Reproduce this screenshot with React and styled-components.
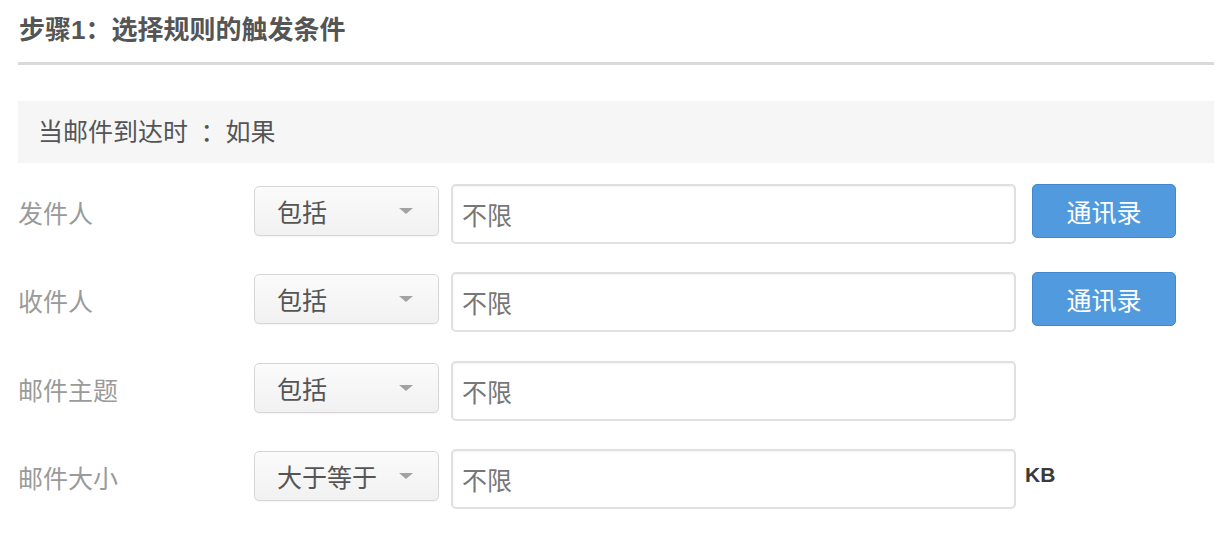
import styled, { createGlobalStyle } from "styled-components";

const GlobalStyle = createGlobalStyle`
    html, body {
        margin: 0;
        padding: 0;
        background: #fff;
    }

    body {
        font-family: "Liberation Sans", "Noto Sans CJK SC", sans-serif;
    }
`;

const StyledPage = styled.main`
    padding: 0 2px 0 18px;
    width: 1216px;
    box-sizing: border-box;
`;

const StepHeader = styled.h2`
    margin: 0;
    padding: 13px 0 15px 1px;
    line-height: 34px;
    font-size: 26px;
    font-weight: bold;
    color: #555;
    border-bottom: 3px solid #d9d9d9;
`;

const Condition = styled.div`
    margin-top: 36px;
    height: 62px;
    line-height: 62px;
    padding-left: 20px;
    background: #f6f6f6;
    font-size: 25px;
    color: #555;
`;

const Rules = styled.section`
    margin-top: 21px;
    display: flex;
    flex-direction: column;
    gap: 28.4px;
`;

const Row = styled.div`
    display: flex;
    align-items: center;
    height: 60px;
`;

const Label = styled.span`
    width: 236px;
    flex-shrink: 0;
    font-size: 25px;
    color: #9a9a9a;
    line-height: 34px;
`;

const Select = styled.div`
    align-self: flex-start;
    margin-top: 2px;
    width: 185px;
    height: 50px;
    box-sizing: border-box;
    display: flex;
    align-items: center;
    justify-content: space-between;
    padding: 0 25px 0 22px;
    border: 1px solid #d6d6d6;
    border-radius: 5px;
    background: linear-gradient(#fbfbfb, #f1f1f1);
    box-shadow: 0 1px 1px rgba(0, 0, 0, 0.04);
    font-size: 25px;
    color: #555;
`;

const Caret = styled.span`
    width: 0;
    height: 0;
    border-left: 7px solid transparent;
    border-right: 7px solid transparent;
    border-top: 6px solid #a3a3a3;
`;

const TextInput = styled.input`
    margin-left: 12px;
    width: 565px;
    height: 60px;
    box-sizing: border-box;
    padding: 0 0 0 9px;
    border: 2px solid #e0e0e0;
    border-radius: 5px;
    box-shadow: inset 0 1px 2px rgba(0, 0, 0, 0.05);
    font-family: "Liberation Sans", "Noto Sans CJK SC", sans-serif;
    font-size: 25px;
    color: #777;
    background: #fff;
    outline: none;
`;

const ContactsButton = styled.button`
    align-self: flex-start;
    margin-left: 16px;
    width: 144px;
    height: 54px;
    border: 1px solid #3f88cf;
    border-radius: 5px;
    background: #529ade;
    color: #fff;
    font-family: "Liberation Sans", "Noto Sans CJK SC", sans-serif;
    font-size: 25px;
    padding: 0;
`;

const Unit = styled.span`
    align-self: flex-start;
    margin: 11px 0 0 9px;
    line-height: 30px;
    font-size: 21px;
    font-weight: bold;
    color: #3a3a3a;
`;

const rules = [
    { label: "发件人", op: "包括", contacts: true },
    { label: "收件人", op: "包括", contacts: true },
    { label: "邮件主题", op: "包括" },
    { label: "邮件大小", op: "大于等于", unit: "KB" },
];

const App = () => {
    return (
        <>
            <GlobalStyle />
            <StyledPage>
                <StepHeader>步骤1：选择规则的触发条件</StepHeader>
                <Condition>当邮件到达时{"\u2002"}：如果</Condition>
                <Rules>
                    {rules.map((rule) => (
                        <Row key={rule.label}>
                            <Label>{rule.label}</Label>
                            <Select>
                                <span>{rule.op}</span>
                                <Caret />
                            </Select>
                            <TextInput defaultValue="不限" readOnly />
                            {rule.contacts && (
                                <ContactsButton>通讯录</ContactsButton>
                            )}
                            {rule.unit && <Unit>{rule.unit}</Unit>}
                        </Row>
                    ))}
                </Rules>
            </StyledPage>
        </>
    );
};

export default App;
